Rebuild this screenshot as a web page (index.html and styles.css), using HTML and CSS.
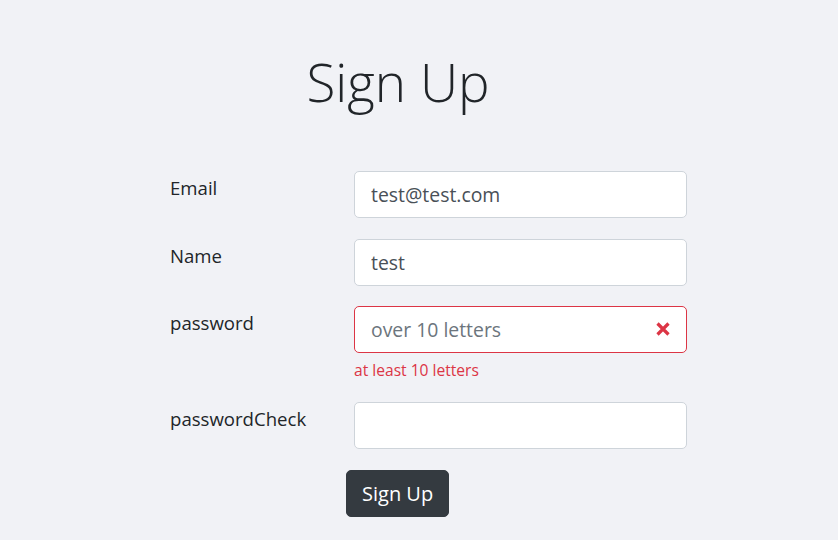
FILE: index.html
```html
<!DOCTYPE html>
<html lang="ko">
<head>
<meta charset="utf-8">
<title>Sign Up</title>
<link rel="stylesheet" href="styles.css">
</head>
<body>
<main class="page">
  <h1 class="title">Sign Up</h1>
  <form class="form">
    <label class="label" for="email">Email</label>
    <div class="field">
      <input class="input" id="email" type="text" value="test@test.com">
    </div>

    <label class="label" for="name">Name</label>
    <div class="field">
      <input class="input" id="name" type="text" value="test">
    </div>

    <label class="label" for="password">password</label>
    <div class="field">
      <div class="input-wrap">
        <input class="input input-invalid" id="password" type="password" placeholder="over 10 letters">
        <svg class="invalid-icon" width="14" height="14" viewBox="0 0 14 14" aria-hidden="true">
          <path d="M1.5 1.5 L12.5 12.5 M12.5 1.5 L1.5 12.5" stroke="#dc3545" stroke-width="3.2" stroke-linecap="butt"/>
        </svg>
      </div>
      <div class="feedback">at least 10 letters</div>
    </div>

    <label class="label" for="passwordCheck">passwordCheck</label>
    <div class="field">
      <input class="input" id="passwordCheck" type="password">
    </div>

    <div class="actions">
      <button class="btn" type="button">Sign Up</button>
    </div>
  </form>
</main>
</body>
</html>
```
FILE: styles.css
```css
html, body {
  margin: 0;
  padding: 0;
}

body {
  background: #f1f2f6;
  color: #212529;
  font-family: "Open Sans", "Noto Sans CJK KR", sans-serif;
  width: 838px;
  height: 540px;
  overflow: hidden;
}

.page {
  width: 517px;
  margin-left: 170px;
  padding-top: 50px;
}

.title {
  margin: 0 61px 0 0;
  font-size: 53px;
  font-weight: 300;
  line-height: 64px;
  text-align: center;
  color: #212529;
}

.form {
  margin-top: 57px;
  display: grid;
  grid-template-columns: 184px 333px;
  row-gap: 20.5px;
  align-items: start;
}

.label {
  font-size: 18.6px;
  line-height: 27px;
  padding-top: 3px;
  color: #212529;
}

.field {
  display: flex;
  flex-direction: column;
}

.input-wrap {
  position: relative;
}

.input {
  box-sizing: border-box;
  width: 333px;
  height: 47px;
  margin: 0;
  padding: 0 16px;
  border: 1px solid #ced4da;
  border-radius: 5px;
  background: #fff;
  font-family: inherit;
  font-size: 19.4px;
  color: #495057;
  outline: none;
  display: block;
}

.input::placeholder {
  color: #6c757d;
  opacity: 1;
}

.input-invalid {
  border-color: #dc3545;
  padding-right: 44px;
}

.invalid-icon {
  position: absolute;
  right: 17px;
  top: 16px;
}

.feedback {
  margin-top: 6px;
  font-size: 15.6px;
  line-height: 22px;
  color: #dc3545;
}

.actions {
  grid-column: 1 / span 2;
  padding-left: 176px;
  margin-top: 1px;
}

.btn {
  box-sizing: border-box;
  height: 47px;
  padding: 0 15px;
  border: 1px solid #343a40;
  border-radius: 5px;
  background: #343a40;
  color: #fff;
  font-family: inherit;
  font-size: 20px;
  line-height: 45px;
  cursor: pointer;
}
```
